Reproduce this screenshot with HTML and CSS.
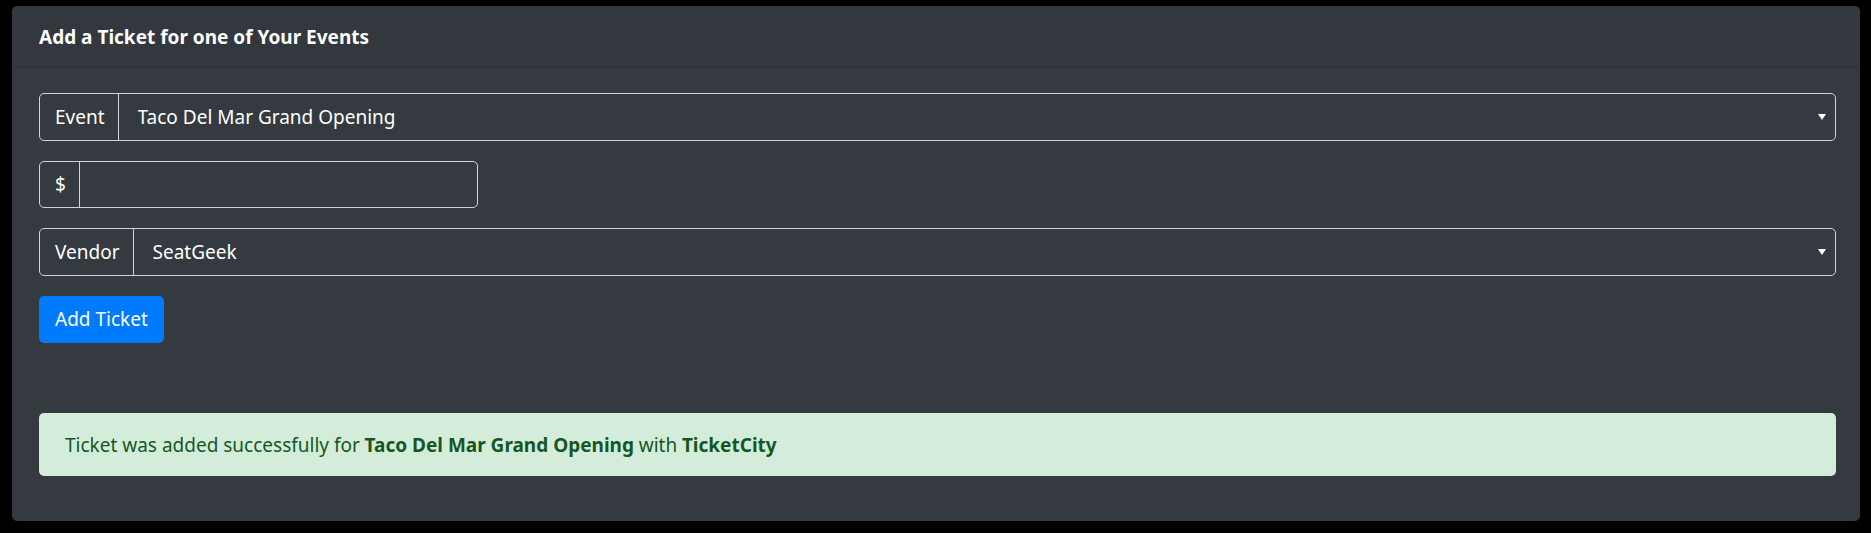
FILE: index.html
```html
<!DOCTYPE html>
<html>
<head>
<meta charset="utf-8">
<link rel="stylesheet" href="styles.css">
</head>
<body>
<div class="card">
  <div class="card-header">Add a Ticket for one of Your Events</div>
  <div class="card-body">
    <form class="ticket-form">
      <div class="input-group">
        <span class="addon">Event</span>
        <div class="select-wrap">
          <select class="control select event-select">
            <option>Taco Del Mar Grand Opening</option>
          </select>
        </div>
      </div>
      <div class="input-group price-group">
        <span class="addon">$</span>
        <input class="control" type="text">
      </div>
      <div class="input-group">
        <span class="addon">Vendor</span>
        <div class="select-wrap">
          <select class="control select vendor-select">
            <option>SeatGeek</option>
          </select>
        </div>
      </div>
      <button type="button" class="btn">Add Ticket</button>
    </form>
    <div class="alert">Ticket was added successfully for <b>Taco Del Mar Grand Opening</b> with <b>TicketCity</b></div>
  </div>
</div>
</body>
</html>
```

FILE: styles.css
```css
* { box-sizing: border-box; }
html, body { margin: 0; background: #000; }
body {
  padding: 6px 11px 12px 12px;
  font-family: "Noto Sans", "Open Sans", sans-serif;
  font-size: 19px;
  color: #fff;
}
.card {
  background: #343a40;
  border-radius: 5px;
  height: 515px;
  display: flex;
  flex-direction: column;
}
.card-header {
  height: 62px;
  padding: 0 27px;
  display: flex;
  align-items: center;
  font-weight: 700;
  font-size: 19px;
  background: rgba(0,0,0,0.03);
  border-bottom: 1px solid rgba(0,0,0,0.125);
  border-radius: 5px 5px 0 0;
}
.card-body {
  padding: 25px 24px 25px 27px;
  display: flex;
  flex-direction: column;
}
.ticket-form {
  display: flex;
  flex-direction: column;
  align-items: flex-start;
}
.input-group {
  display: flex;
  width: 100%;
  height: 47.5px;
  border: 1px solid #ced4da;
  border-radius: 5px;
  margin-bottom: 20px;
}
.price-group { width: 439px; }
.addon {
  display: flex;
  align-items: center;
  padding: 0 13px 0 15px;
  border-right: 1px solid #ced4da;
  color: #fff;
  font-size: 19px;
}
.select-wrap { flex: 1; position: relative; }
.control {
  flex: 1;
  height: 100%;
  width: 100%;
  border: 0;
  background: transparent;
  color: #fff;
  font: inherit;
  font-size: 19px;
  padding: 0 19px;
  outline: none;
}
.select {
  -webkit-appearance: none;
  appearance: none;
  background-image: url("data:image/svg+xml,%3Csvg xmlns='http://www.w3.org/2000/svg' width='8' height='6'%3E%3Cpath d='M0 0h8L4 6z' fill='%23fff'/%3E%3C/svg%3E");
  background-repeat: no-repeat;
  background-position: right 9px center;
  background-size: 8px 6px;
}
.select option { background: #343a40; color: #fff; }
.btn {
  height: 47.5px;
  padding: 0 16px;
  background: #007bff;
  color: #fff;
  border: 0;
  border-radius: 5px;
  font: inherit;
  font-size: 19px;
}
.alert {
  margin-top: 70px;
  height: 63px;
  display: flex;
  align-items: center;
  padding: 0 26px;
  background: #d4edda;
  color: #155724;
  border-radius: 5px;
  font-size: 19px;
}
.alert b { font-weight: 700; margin: 0 0.25em; }
```
